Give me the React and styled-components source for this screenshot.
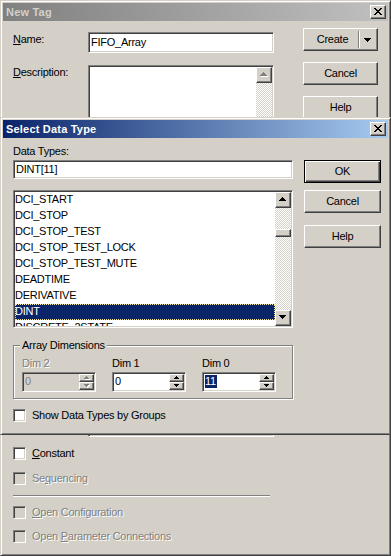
import React from "react";
import styled, { createGlobalStyle, css } from "styled-components";

const GlobalStyle = createGlobalStyle`
  html, body { margin: 0; padding: 0; background: #d4d0c8; }
  body {
    font-family: "Liberation Sans", Arial, sans-serif;
    font-size: 11px;
    letter-spacing: -0.25px;
    color: #000;
  }
  * { box-sizing: border-box; }
`;

const face = "#d4d0c8";

const frame = css`
  background: ${face};
  border: 1px solid;
  border-color: ${face} #404040 #404040 ${face};
  box-shadow: inset 1px 1px #fff, inset -1px -1px #808080;
  padding: 2px;
  display: flex;
  flex-direction: column;
`;

const raised = css`
  border: 1px solid;
  border-color: #fff #404040 #404040 #fff;
  box-shadow: inset -1px -1px #808080, inset 1px 1px ${face};
`;

const defaultRaised = css`
  border: 1px solid #000;
  box-shadow: inset 1px 1px #fff, inset -1px -1px #404040, inset -2px -2px #808080;
`;

const sunken = css`
  border: 1px solid;
  border-color: #808080 #fff #fff #808080;
  box-shadow: inset 1px 1px #404040, inset -1px -1px ${face};
`;

const checker = css`
  background: repeating-conic-gradient(#fff 0 25%, ${face} 0 50%) 0 0 / 2px 2px;
`;

const Page = styled.div`
  position: relative;
  width: 391px;
  height: 556px;
  overflow: hidden;
`;

const Window = styled.div`
  ${frame}
  width: 391px;
  height: 556px;
`;

const Dialog = styled.div`
  ${frame}
  position: absolute;
  left: 0;
  top: 117px;
  width: 391px;
  height: 318px;
`;

const TitleBar = styled.div`
  flex: none;
  height: 18px;
  display: flex;
  align-items: center;
  justify-content: space-between;
  padding: 0 2px 0 3px;
  background: ${(p) =>
    p.$active
      ? "linear-gradient(90deg, #0a246a, #a6caf0)"
      : "linear-gradient(90deg, #808080, #c0c0c0)"};
  color: ${(p) => (p.$active ? "#fff" : face)};
  font-weight: bold;
  letter-spacing: 0.2px;
`;

const TitleText = styled.span`
  line-height: 13px;
`;

const CloseButton = styled.div`
  ${raised}
  width: 16px;
  height: 14px;
  background: ${face};
  display: flex;
  align-items: center;
  justify-content: center;
  padding: 0 1px 1px 0;
`;

const Glyph = styled.svg`
  display: block;
`;

function CloseGlyph() {
  return (
    <Glyph width="8" height="7" viewBox="0 0 8 7" shapeRendering="crispEdges">
      <path
        fill="#000"
        d="M0 0h2v1H0zM6 0h2v1H6zM1 1h2v1H1zM5 1h2v1H5zM2 2h4v1H2zM3 3h2v1H3zM2 4h4v1H2zM1 5h2v1H1zM5 5h2v1H5zM0 6h2v1H0zM6 6h2v1H6z"
      />
    </Glyph>
  );
}

function Arrow({ dir = "down", w = 7, disabled }) {
  const rows = (w + 1) / 2;
  let d = "";
  for (let i = 0; i < rows; i++) {
    const y = dir === "down" ? i : rows - 1 - i;
    d += `M${i} ${y}h${w - 2 * i}v1H${i}z`;
  }
  return (
    <Glyph width={w + 1} height={rows + 1} viewBox={`0 0 ${w + 1} ${rows + 1}`} shapeRendering="crispEdges">
      {disabled && <path d={d} fill="#fff" transform="translate(1 1)" />}
      <path d={d} fill={disabled ? "#808080" : "#000"} />
    </Glyph>
  );
}

/* ---------- New Tag (background window) ---------- */

const NewTagTop = styled.div`
  display: flex;
  gap: 29px;
  padding: 7px 0 0 10px;
`;

const Form = styled.div`
  display: flex;
  flex-direction: column;
  width: 261px;
`;

const FormRow = styled.div`
  display: grid;
  grid-template-columns: 75px 186px;
  align-items: start;
  margin-top: ${(p) => p.$mt}px;
`;

const Label = styled.div`
  line-height: 13px;
  padding-top: ${(p) => p.$pt ?? 0}px;
  color: ${(p) => (p.$disabled ? "#808080" : "#000")};
  text-shadow: ${(p) => (p.$disabled ? "1px 1px #fff" : "none")};
  white-space: nowrap;
`;

const TextBox = styled.div`
  ${sunken}
  height: ${(p) => p.$h}px;
  width: ${(p) => p.$w ?? "auto"};
  background: #fff;
  display: flex;
  align-items: center;
  padding: 0 2px 1px 2px;
  line-height: 13px;
  white-space: nowrap;
`;

const TextArea = styled.div`
  ${sunken}
  height: 90px;
  background: #fff;
  display: flex;
  padding: 1px;
`;

const Fill = styled.div`
  flex: 1;
`;

const ScrollBar = styled.div`
  width: 16px;
  flex: none;
  display: flex;
  flex-direction: column;
`;

const ScrollButton = styled.div`
  ${raised}
  background: ${face};
  height: ${(p) => p.$h ?? 16}px;
  flex: none;
  display: flex;
  align-items: center;
  justify-content: center;
  padding: ${(p) => (p.$small ? "0" : "0 1px 1px 0")};
`;

const Track = styled.div`
  ${checker}
  flex: ${(p) => (p.$h ? "none" : "1")};
  height: ${(p) => (p.$h ? `${p.$h}px` : "auto")};
`;

const Thumb = styled.div`
  ${raised}
  background: ${face};
  height: 8px;
  flex: none;
`;

const ButtonColumn = styled.div`
  display: flex;
  flex-direction: column;
  padding-top: ${(p) => p.$pt ?? 0}px;
`;

const Button = styled.button`
  ${(p) => (p.$default ? defaultRaised : raised)}
  width: ${(p) => p.$w}px;
  height: 23px;
  margin-top: ${(p) => p.$mt ?? 0}px;
  padding: 0 0 1px 0;
  background: ${face};
  font: inherit;
  letter-spacing: inherit;
  color: #000;
  display: flex;
  align-items: center;
  justify-content: center;
  line-height: 13px;
`;

const SplitMain = styled.span`
  flex: 1;
  text-align: center;
  padding-left: 3px;
`;

const SplitDivider = styled.span`
  width: 2px;
  height: 17px;
  border-left: 1px solid #808080;
  border-right: 1px solid #fff;
  margin-top: 1px;
`;

const SplitArrow = styled.span`
  width: 17px;
  display: flex;
  justify-content: center;
  padding: 2px 2px 0 0;
`;

const NewTagBottom = styled.div`
  margin-top: auto;
  padding: 0 0 10px 10px;
  display: flex;
  flex-direction: column;
  align-items: flex-start;
`;

const Combo = styled.div`
  ${sunken}
  margin-left: 75px;
  width: 186px;
  height: 21px;
  background: #fff;
  display: flex;
  justify-content: flex-end;
  padding: 1px;
`;

const ComboButton = styled.div`
  ${raised}
  width: 16px;
  background: ${face};
`;

const CheckRow = styled.div`
  display: flex;
  align-items: center;
  gap: 6px;
  height: 13px;
  margin-top: ${(p) => p.$mt ?? 0}px;
  line-height: 13px;
  white-space: nowrap;
  color: ${(p) => (p.$disabled ? "#808080" : "#000")};
  text-shadow: ${(p) => (p.$disabled ? "1px 1px #fff" : "none")};
`;

const CheckBox = styled.span`
  ${sunken}
  width: 13px;
  height: 13px;
  flex: none;
  background: ${(p) => (p.$disabled ? face : "#fff")};
`;

const Separator = styled.div`
  width: 257px;
  height: 2px;
  margin-top: ${(p) => p.$mt}px;
  border-top: 1px solid #808080;
  border-bottom: 1px solid #fff;
`;

/* ---------- Select Data Type dialog ---------- */

const DialogBody = styled.div`
  display: flex;
  gap: 11px;
  padding-left: 10px;
`;

const LeftCol = styled.div`
  width: 280px;
  display: flex;
  flex-direction: column;
`;

const ListBox = styled.div`
  ${sunken}
  margin-top: 11px;
  height: 138px;
  background: #fff;
  display: flex;
  padding: 1px;
`;

const Items = styled.div`
  flex: 1;
  overflow: hidden;
  display: flex;
  flex-direction: column;
`;

const Item = styled.div`
  height: 16px;
  flex: none;
  line-height: 14px;
  white-space: nowrap;
  padding-left: 0;
  background: ${(p) => (p.$selected ? "#0a246a" : "transparent")};
  color: ${(p) => (p.$selected ? "#fff" : "#000")};
  outline: ${(p) => (p.$selected ? "1px dotted #f4e9a6" : "none")};
  outline-offset: -1px;
`;

const Group = styled.div`
  margin-top: 17px;
  width: 280px;
  border: 1px solid #808080;
  box-shadow: inset 1px 1px #fff, 1px 1px #fff;
  padding: 0 8px 6px 8px;
  display: flex;
  flex-direction: column;
`;

const Legend = styled.span`
  align-self: flex-start;
  margin: -7px 0 0 -2px;
  padding: 0 2px;
  background: ${face};
  line-height: 13px;
`;

const DimRow = styled.div`
  display: flex;
  gap: 16px;
  margin-top: 5px;
`;

const DimField = styled.div`
  display: flex;
  flex-direction: column;
  gap: 2px;
`;

const SpinBox = styled.div`
  ${sunken}
  width: 74px;
  height: 20px;
  padding: 1px;
  display: flex;
  background: ${(p) => (p.$disabled ? face : "#fff")};
  color: ${(p) => (p.$disabled ? "#808080" : "#000")};
`;

const SpinText = styled.div`
  flex: 1;
  display: flex;
  align-items: center;
  padding: 0 0 1px 1px;
  line-height: 13px;
`;

const Selected = styled.span`
  background: #0a246a;
  color: #fff;
  padding: 0 1px 0 0;
`;

const SpinButtons = styled.div`
  width: 15px;
  display: flex;
  flex-direction: column;
`;

const SpinButton = styled.div`
  ${raised}
  flex: 1;
  background: ${face};
  display: flex;
  align-items: center;
  justify-content: center;
`;

const items = [
  "DCI_START",
  "DCI_STOP",
  "DCI_STOP_TEST",
  "DCI_STOP_TEST_LOCK",
  "DCI_STOP_TEST_MUTE",
  "DEADTIME",
  "DERIVATIVE",
  "DINT",
  "DISCRETE_2STATE",
];

const dims = [
  { label: "Dim 2", value: "0", disabled: true },
  { label: "Dim 1", value: "0" },
  { label: "Dim 0", value: "11", selected: true },
];

function Spin({ value, disabled, selected }) {
  return (
    <SpinBox $disabled={disabled}>
      <SpinText>{selected ? <Selected>{value}</Selected> : value}</SpinText>
      <SpinButtons>
        <SpinButton>
          <Arrow dir="up" w={5} disabled={disabled} />
        </SpinButton>
        <SpinButton>
          <Arrow dir="down" w={5} disabled={disabled} />
        </SpinButton>
      </SpinButtons>
    </SpinBox>
  );
}

export default function App() {
  return (
    <Page>
      <GlobalStyle />
      <Window>
        <TitleBar>
          <TitleText>New Tag</TitleText>
          <CloseButton>
            <CloseGlyph />
          </CloseButton>
        </TitleBar>
        <NewTagTop>
          <Form>
            <FormRow $mt={4}>
              <Label $pt={1}>
                <u>N</u>ame:
              </Label>
              <TextBox $h={21}>FIFO_Array</TextBox>
            </FormRow>
            <FormRow $mt={12}>
              <Label $pt={1}>
                <u>D</u>escription:
              </Label>
              <TextArea>
                <Fill />
                <ScrollBar>
                  <ScrollButton>
                    <Arrow dir="up" disabled />
                  </ScrollButton>
                  <Track />
                </ScrollBar>
              </TextArea>
            </FormRow>
          </Form>
          <ButtonColumn>
            <Button $w={75}>
              <SplitMain>Create</SplitMain>
              <SplitDivider />
              <SplitArrow>
                <Arrow dir="down" />
              </SplitArrow>
            </Button>
            <Button $w={75} $mt={11}>Cancel</Button>
            <Button $w={75} $mt={11}>Help</Button>
          </ButtonColumn>
        </NewTagTop>
        <NewTagBottom>
          <Combo>
            <ComboButton />
          </Combo>
          <CheckRow $mt={10}>
            <CheckBox />
            <span>
              <u>C</u>onstant
            </span>
          </CheckRow>
          <CheckRow $mt={12} $disabled>
            <CheckBox $disabled />
            <span>
              Se<u>q</u>uencing
            </span>
          </CheckRow>
          <Separator $mt={10} />
          <CheckRow $mt={9} $disabled>
            <CheckBox $disabled />
            <span>
              <u>O</u>pen Configuration
            </span>
          </CheckRow>
          <CheckRow $mt={11} $disabled>
            <CheckBox $disabled />
            <span>
              Open <u>P</u>arameter Connections
            </span>
          </CheckRow>
        </NewTagBottom>
      </Window>

      <Dialog>
        <TitleBar $active>
          <TitleText>Select Data Type</TitleText>
          <CloseButton>
            <CloseGlyph />
          </CloseButton>
        </TitleBar>
        <DialogBody>
          <LeftCol>
            <Label style={{ marginTop: 7 }}>Data Types:</Label>
            <TextBox $h={19} style={{ marginTop: 2 }}>
              DINT[11]
            </TextBox>
            <ListBox>
              <Items>
                {items.map((it) => (
                  <Item key={it} $selected={it === "DINT"}>
                    {it}
                  </Item>
                ))}
              </Items>
              <ScrollBar>
                <ScrollButton>
                  <Arrow dir="up" />
                </ScrollButton>
                <Track $h={21} />
                <Thumb />
                <Track />
                <ScrollButton>
                  <Arrow dir="down" />
                </ScrollButton>
              </ScrollBar>
            </ListBox>
            <Group>
              <Legend>Array Dimensions</Legend>
              <DimRow>
                {dims.map((d) => (
                  <DimField key={d.label}>
                    <Label $disabled={d.disabled}>{d.label}</Label>
                    <Spin value={d.value} disabled={d.disabled} selected={d.selected} />
                  </DimField>
                ))}
              </DimRow>
            </Group>
            <CheckRow $mt={10}>
              <CheckBox />
              <span>Show Data Types by Groups</span>
            </CheckRow>
          </LeftCol>
          <ButtonColumn $pt={22}>
            <Button $w={77} $default>OK</Button>
            <Button $w={77} $mt={7}>Cancel</Button>
            <Button $w={77} $mt={12}>Help</Button>
          </ButtonColumn>
        </DialogBody>
      </Dialog>
    </Page>
  );
}
